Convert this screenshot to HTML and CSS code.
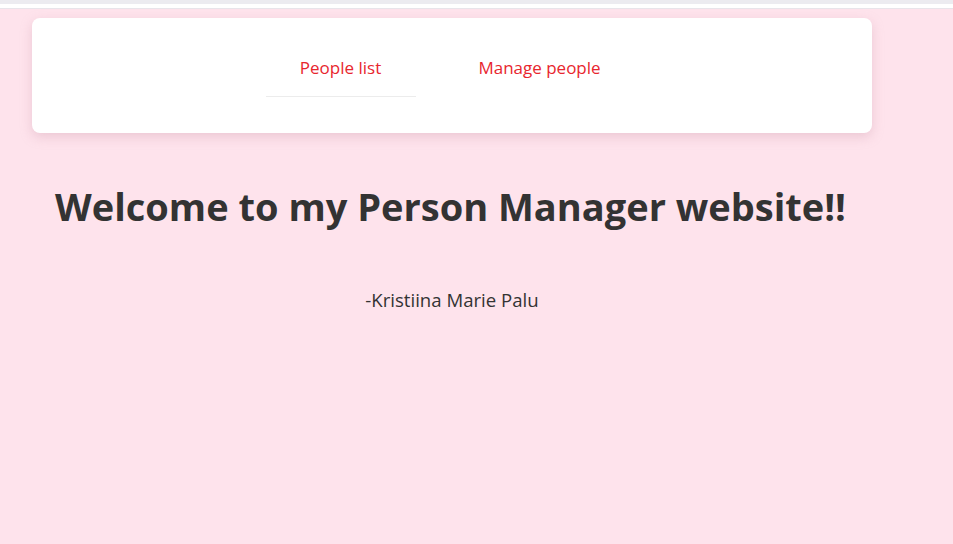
FILE: index.html
```html
<!DOCTYPE html>
<html>
<head>
<meta charset="utf-8">
<link rel="stylesheet" href="styles.css">
</head>
<body>
<div class="topbar"></div>
<div class="page">
  <header class="card">
    <nav class="nav">
      <a class="nav-item active">People list</a>
      <a class="nav-item">Manage people</a>
    </nav>
  </header>
  <main class="content">
    <h1 class="title">Welcome to my Person Manager website!!</h1>
    <p class="author">-Kristiina Marie Palu</p>
  </main>
</div>
</body>
</html>
```
FILE: styles.css
```css
html, body {
  margin: 0;
  padding: 0;
  background: #fee3ec;
  height: 100%;
}
body {
  font-family: "Open Sans", "Noto Sans", sans-serif;
  color: #333333;
}
.topbar {
  height: 4px;
  background: #ecebf0;
  border-bottom: 4px solid #ffffff;
  box-shadow: 0 1px 0 #e8e4ea;
}
.page {
  padding: 10px 81px 0 32px;
}
.card {
  background: #ffffff;
  border-radius: 8px;
  box-shadow: 0 4px 12px rgba(200, 150, 165, 0.35);
  height: 115px;
  display: flex;
  justify-content: center;
}
.nav {
  display: flex;
  gap: 49px;
  margin-left: -24px;
  padding-top: 30px;
}
.nav-item {
  width: 150px;
  height: 49px;
  box-sizing: border-box;
  text-align: center;
  color: #e8262e;
  font-size: 17px;
  line-height: 40px;
  border-bottom: 1px solid transparent;
}
.nav-item.active {
  border-bottom-color: #ececec;
}
.content {
  padding: 0 0 0 23px;
}
.title {
  margin: 47px 0 0 0;
  font-size: 38px;
  font-weight: 700;
  line-height: 52px;
  color: #333333;
  letter-spacing: 0;
}
.author {
  margin: 56px 0 0 0;
  text-align: center;
  font-size: 18.6px;
  line-height: 24px;
  padding-right: 23px;
}
```
